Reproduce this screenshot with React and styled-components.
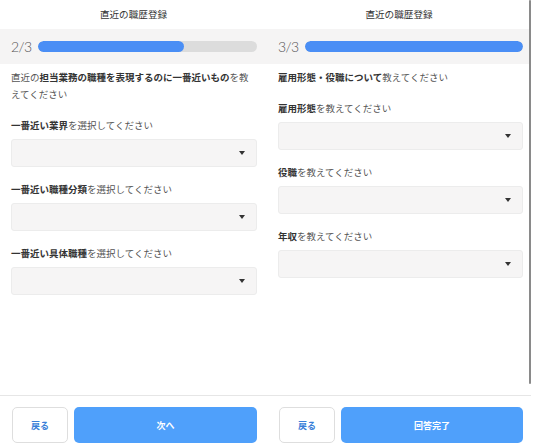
import React from "react";
import styled, { createGlobalStyle } from "styled-components";

const GlobalStyle = createGlobalStyle`
  html, body {
    margin: 0;
    padding: 0;
    background: #ffffff;
  }
  body {
    font-family: "Noto Sans CJK JP", "Noto Sans", sans-serif;
    color: #333;
  }
`;

const Frame = styled.div`
  display: grid;
  grid-template-columns: 267px 264px 3px;
  width: 534px;
  height: 448px;
  overflow: hidden;
`;

const Panel = styled.div`
  --pad-l: 11px;
  --pad-r: ${(p) => p.$padR}px;
  position: relative;
  display: flex;
  flex-direction: column;
  height: 448px;
  background: #fff;
`;

const Header = styled.div`
  height: 29px;
  line-height: 29px;
  text-align: center;
  font-size: 9.6px;
  color: #333;
`;

const ProgressRow = styled.div`
  height: 35px;
  display: flex;
  align-items: center;
  gap: 8px;
  padding: 0 var(--pad-r) 0 var(--pad-l);
  background: #f5f4f4;
`;

const StepText = styled.span`
  font-family: "Lato", "Noto Sans", sans-serif;
  font-weight: 300;
  font-size: 14px;
  letter-spacing: -0.6px;
  color: #555;
  width: 19px;
`;

const Track = styled.div`
  flex: 1;
  height: 11px;
  border-radius: 6px;
  background: #dcdcdc;
  overflow: hidden;
`;

const Fill = styled.div`
  height: 100%;
  border-radius: 6px;
  background: #4a8ef5;
`;

const Body = styled.div`
  flex: 1;
  padding: 5px var(--pad-r) 0 var(--pad-l);
`;

const Question = styled.p`
  margin: 0;
  font-size: 9.5px;
  line-height: 17px;
  color: #555;

  b {
    color: #333;
    font-weight: 700;
  }
`;

const Field = styled.div`
  margin-top: 14px;
`;

const Label = styled.div`
  font-size: 9.5px;
  line-height: 17px;
  margin-bottom: 5px;
  color: #555;

  b {
    color: #333;
    font-weight: 700;
  }
`;

const SelectBox = styled.div`
  height: 28px;
  box-sizing: border-box;
  border: 1px solid #ececec;
  border-radius: 3px;
  background: #f6f5f5;
  display: flex;
  align-items: center;
  justify-content: flex-end;
  padding-right: 11px;
`;

const Caret = styled.span`
  width: 0;
  height: 0;
  border-left: 3.5px solid transparent;
  border-right: 3.5px solid transparent;
  border-top: 4px solid #333;
`;

const Footer = styled.div`
  border-top: 1px solid #e6e6e6;
  padding: 11px var(--pad-r) 5px 12px;
  display: flex;
  gap: 6px;
`;

const Button = styled.button`
  height: 36px;
  box-sizing: border-box;
  border-radius: 5px;
  font-family: "Noto Sans CJK JP", "Noto Sans", sans-serif;
  font-size: 9px;
  font-weight: 700;
  cursor: pointer;
  padding: 0;
  ${(p) =>
    p.$primary
      ? `
    flex: 1;
    border: none;
    background: #4fa0fb;
    color: #fff;
  `
      : `
    width: 56px;
    border: 1.5px solid #dedede;
    background: #fff;
    color: #3a7fd8;
  `}
`;

const ScrollThumb = styled.div`
  position: absolute;
  right: 0;
  top: 0;
  width: 2px;
  height: 384px;
  background: #8a8a8a;
  border-radius: 1px;
`;

const Select = () => (
  <SelectBox>
    <Caret />
  </SelectBox>
);

const App = () => {
  return (
    <>
      <GlobalStyle />
      <Frame>
        <Panel $padR={10}>
          <Header>直近の職歴登録</Header>
          <ProgressRow>
            <StepText>2/3</StepText>
            <Track>
              <Fill style={{ width: `${(2 / 3) * 100}%` }} />
            </Track>
          </ProgressRow>
          <Body>
            <Question>
              直近の<b>担当業務の職種を表現するのに一番近いもの</b>を教えてください
            </Question>
            <Field>
              <Label>
                <b>一番近い業界</b>を選択してください
              </Label>
              <Select />
            </Field>
            <Field>
              <Label>
                <b>一番近い職種分類</b>を選択してください
              </Label>
              <Select />
            </Field>
            <Field>
              <Label>
                <b>一番近い具体職種</b>を選択してください
              </Label>
              <Select />
            </Field>
          </Body>
          <Footer>
            <Button>戻る</Button>
            <Button $primary>次へ</Button>
          </Footer>
        </Panel>

        <Panel $padR={8}>
          <Header>直近の職歴登録</Header>
          <ProgressRow>
            <StepText>3/3</StepText>
            <Track>
              <Fill style={{ width: "100%" }} />
            </Track>
          </ProgressRow>
          <Body>
            <Question>
              <b>雇用形態・役職について</b>教えてください
            </Question>
            <Field>
              <Label>
                <b>雇用形態</b>を教えてください
              </Label>
              <Select />
            </Field>
            <Field>
              <Label>
                <b>役職</b>を教えてください
              </Label>
              <Select />
            </Field>
            <Field>
              <Label>
                <b>年収</b>を教えてください
              </Label>
              <Select />
            </Field>
          </Body>
          <Footer>
            <Button>戻る</Button>
            <Button $primary>回答完了</Button>
          </Footer>
          <ScrollThumb />
        </Panel>
        <div />
      </Frame>
    </>
  );
};

export default App;
